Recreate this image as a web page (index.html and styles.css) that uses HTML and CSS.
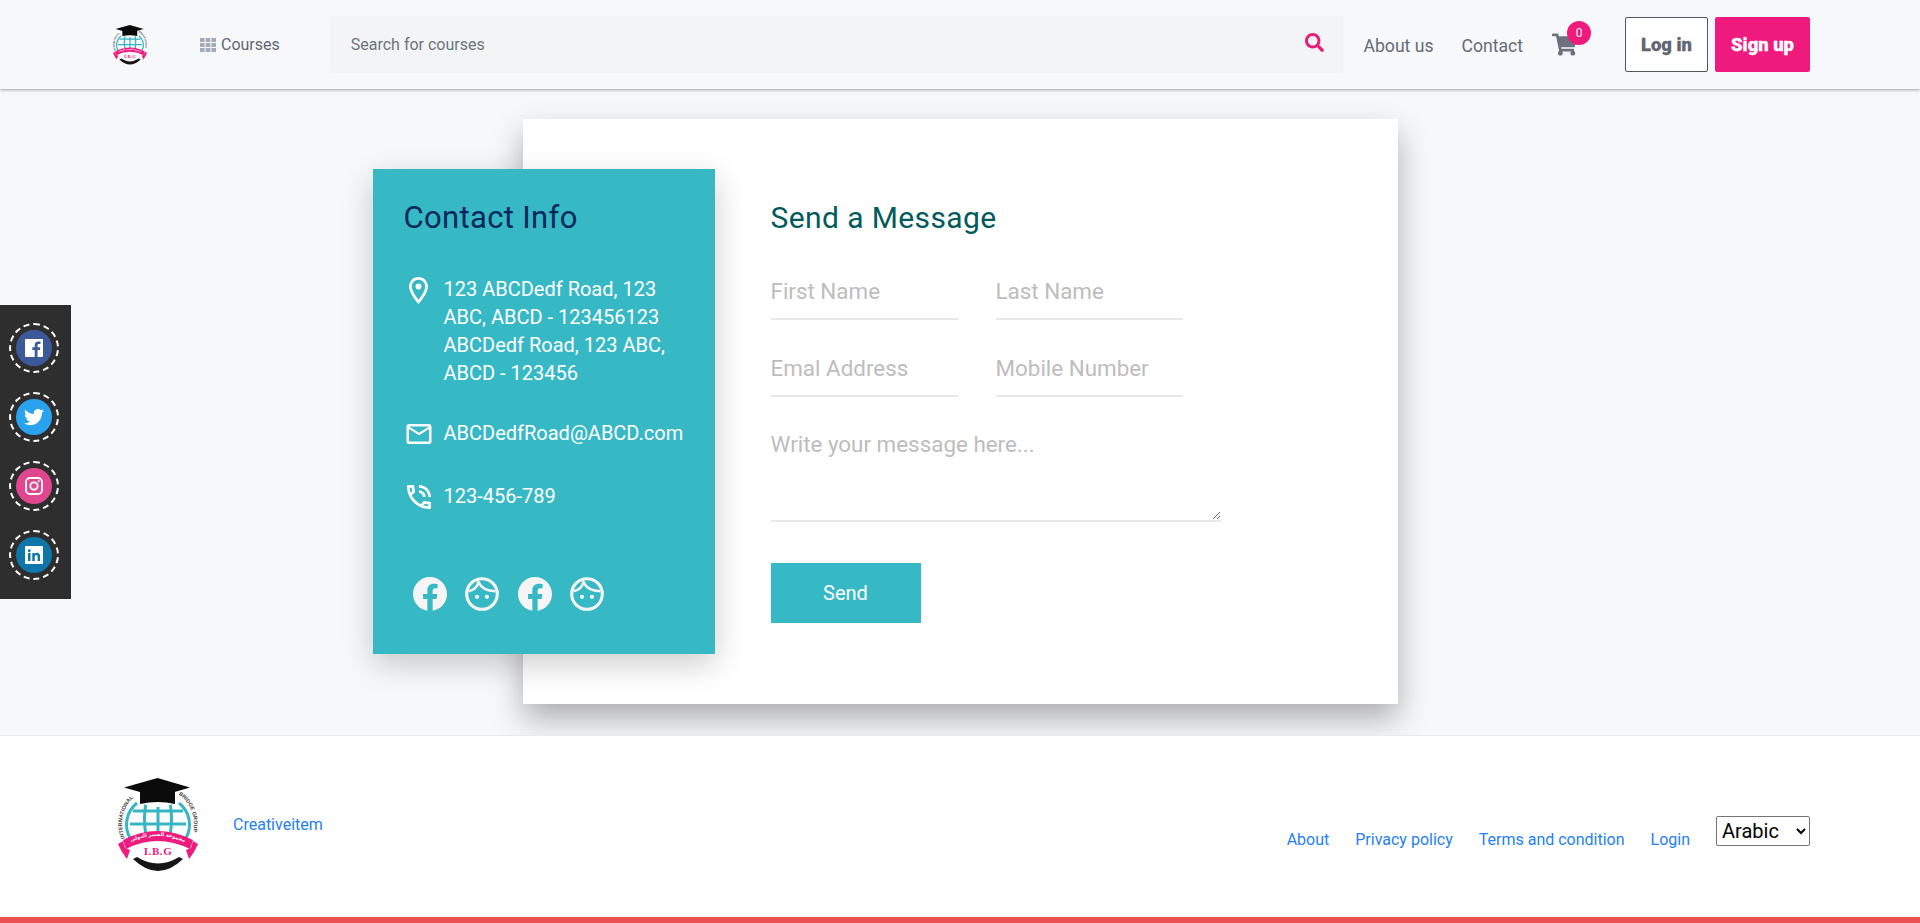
FILE: index.html
```html
<!DOCTYPE html>
<html lang="en">
<head>
<meta charset="utf-8">
<title>Contact</title>
<link rel="stylesheet" href="styles.css">
</head>
<body>
<svg class="defs" width="0" height="0" aria-hidden="true">
  <defs>
    <path id="ringL" d="M7.900 60.100 A36 36 0 0 1 20.400 16.500"/>
    <path id="ringR" d="M61.600 16.500 A36 36 0 0 1 74.100 60.100"/>
    <path id="ribbonArc" d="M8 66.500 Q40 49.500 72 66.500"/>
    <symbol id="logo" viewBox="0 0 82 94">
      <text class="logo-ring"><textPath href="#ringL">INTERNATIONAL</textPath></text>
      <text class="logo-ring"><textPath href="#ringR">BRIDGE GROUP</textPath></text>
      <path d="M13 60A27.500 27.500 0 0 1 20 25M69 60A27.500 27.500 0 0 0 62 25" fill="none" stroke="#35b7c3" stroke-width="3"/>
      <path d="M41 26V58M29 25Q26 40 29 58M53 25Q56 40 53 58M16 33H66M13 46H69" fill="none" stroke="#35b7c3" stroke-width="3"/>
      <path d="M22 14H60V24Q41 34 22 24Z" fill="#fff"/>
      <path d="M23 12H58V26Q41 22 23 26Z" fill="#0b0b0b"/>
      <path d="M40.500 0L73 9.500L40.500 19L7 9.500Z" fill="#0b0b0b"/>
      <path d="M6 62Q40 44 76 62L73 71Q40 55 9 71Z" fill="#ef1a7e"/>
      <path d="M6 63L1 66L5 74L10 81L13 72L8 70Z" fill="#ef1a7e"/>
      <path d="M76 63L81 66L77 74L72 81L69 72L74 70Z" fill="#ef1a7e"/>
      <path d="M16 81Q41 105 66 81L62 79Q41 92 20 79Z" fill="#161616"/>
      <text class="logo-ibg" x="41" y="77" text-anchor="middle">I.B.G</text>
      <text class="logo-ar"><textPath href="#ribbonArc" startOffset="10%">مجموعة الجسر الدولي</textPath></text>
    </symbol>
    <path id="fb" d="M504 256C504 119 393 8 256 8S8 119 8 256c0 123.780 90.690 226.380 209.250 245V327.690h-63V256h63v-54.640c0-62.150 37-96.480 93.670-96.480 27.140 0 55.520 4.840 55.520 4.840v61h-31.280c-30.800 0-40.410 19.120-40.410 38.730V256h68.780l-11 71.690h-57.780V501C413.310 482.380 504 379.780 504 256z"/>
    <g id="face">
      <circle cx="12" cy="12" r="10.800" fill="none" stroke="currentColor" stroke-width="2.200"/>
      <path d="M2.500 10C6 9.500 8.500 7.500 9.500 3.500 11 7 15 9.800 21.500 10" fill="none" stroke="currentColor" stroke-width="1.800"/>
      <circle cx="8.500" cy="14" r="1.500" fill="currentColor"/>
      <circle cx="15.500" cy="14" r="1.500" fill="currentColor"/>
    </g>
  </defs>
</svg>

<header class="topbar">
  <a class="brand" href="#"><svg class="brand-logo"><use href="#logo"/></svg></a>
  <a class="courses" href="#">
    <svg class="grid-icon" viewBox="0 0 16 14"><path d="M0 0h4.600v4H0zM5.700 0h4.600v4H5.700zM11.400 0H16v4h-4.600zM0 5h4.600v4H0zM5.700 5h4.600v4H5.700zM11.400 5H16v4h-4.600zM0 10h4.600v4H0zM5.700 10h4.600v4H5.700zM11.400 10H16v4h-4.600z"/></svg>
    Courses
  </a>
  <form class="search">
    <input class="search-input" type="text" placeholder="Search for courses">
    <svg class="search-icon" viewBox="0 0 512 512"><path d="M505 442.700L405.300 343c-4.500-4.500-10.600-7-17-7H372c27.600-35.300 44-79.700 44-128C416 93.100 322.900 0 208 0S0 93.100 0 208s93.100 208 208 208c48.300 0 92.700-16.400 128-44v16.300c0 6.400 2.500 12.500 7 17l99.700 99.700c9.400 9.400 24.600 9.400 33.900 0l28.300-28.300c9.400-9.400 9.400-24.600.1-34zM208 336c-70.700 0-128-57.200-128-128 0-70.700 57.200-128 128-128 70.700 0 128 57.200 128 128 0 70.700-57.200 128-128 128z"/></svg>
  </form>
  <nav class="nav">
    <a href="#">About us</a>
    <a href="#">Contact</a>
  </nav>
  <a class="cart" href="#">
    <svg class="cart-icon" viewBox="0 0 576 512"><path d="M528.120 301.319l47.273-208C578.806 78.301 567.391 67 551.990 67H159.208l-9.166-44.810C147.758 10.021 137.930 0 125.529 0H24C10.745 0 0 10.745 0 24v16c0 13.255 10.745 24 24 24h69.883l70.248 343.435C147.325 417.100 136 435.222 136 456c0 30.928 25.072 56 56 56s56-25.072 56-56c0-15.674-6.447-29.835-16.824-40h209.647C430.447 426.165 424 440.326 424 456c0 30.928 25.072 56 56 56s56-25.072 56-56c0-22.172-12.888-41.332-31.579-50.405l5.517-24.276c3.413-15.018-8.002-29.319-23.403-29.319H218.117l-6.545-32h293.145c11.206 0 20.920-7.754 23.403-18.681z"/></svg>
    <span class="badge">0</span>
  </a>
  <a class="btn btn-login" href="#">Log in</a>
  <a class="btn btn-signup" href="#">Sign up</a>
</header>

<aside class="share">
  <a class="share-ring" href="#"><span class="share-dot dot-fb">
    <svg class="share-icon" viewBox="0 0 18 18"><path fill="#fff" d="M1 0h16a1 1 0 0 1 1 1v16a1 1 0 0 1-1 1h-4.500v-7h2.400l.4-2.800h-2.800V6.500c0-.8.300-1.400 1.400-1.400H15.500V2.600c-.3 0-1.100-.1-2.100-.1-2.200 0-3.700 1.300-3.700 3.700v2H7.300V11h2.400v7H1a1 1 0 0 1-1-1V1a1 1 0 0 1 1-1z"/></svg>
  </span></a>
  <a class="share-ring" href="#"><span class="share-dot dot-tw">
    <svg class="share-icon share-icon-lg" viewBox="0 0 512 512"><path fill="#fff" d="M459.370 151.716c.325 4.548.325 9.097.325 13.645 0 138.720-105.583 298.558-298.558 298.558-59.452 0-114.680-17.219-161.137-47.106 8.447.974 16.568 1.299 25.340 1.299 49.055 0 94.213-16.568 130.274-44.832-46.132-.975-84.792-31.188-98.112-72.772 6.498.974 12.995 1.624 19.818 1.624 9.421 0 18.843-1.300 27.614-3.573-48.081-9.747-84.143-51.980-84.143-102.985v-1.299c13.969 7.797 30.214 12.670 47.431 13.319-28.264-18.843-46.781-51.005-46.781-87.391 0-19.492 5.197-37.360 14.294-52.954 51.655 63.675 129.300 105.258 216.365 109.807-1.624-7.797-2.599-15.918-2.599-24.040 0-57.828 46.782-104.934 104.934-104.934 30.213 0 57.502 12.670 76.670 33.137 23.715-4.548 46.456-13.320 66.599-25.340-7.798 24.366-24.366 43.534-46.132 56.205 21.117-2.274 41.584-8.122 60.426-16.243-14.292 20.791-32.161 39.308-52.628 54.253z"/></svg>
  </span></a>
  <a class="share-ring" href="#"><span class="share-dot dot-ig">
    <svg class="share-icon" viewBox="0 0 18 18"><rect x="1" y="1" width="16" height="16" rx="4" fill="none" stroke="#fff" stroke-width="1.800"/><circle cx="9" cy="9" r="3.700" fill="none" stroke="#fff" stroke-width="1.800"/><circle cx="13.700" cy="4.300" r="1" fill="#fff"/></svg>
  </span></a>
  <a class="share-ring" href="#"><span class="share-dot dot-in">
    <svg class="share-icon" viewBox="0 0 18 18"><path fill="#fff" fill-rule="evenodd" d="M1 0h16a1 1 0 0 1 1 1v16a1 1 0 0 1-1 1H1a1 1 0 0 1-1-1V1a1 1 0 0 1 1-1zM3 7v8h2.500V7zm1.250-3.800a1.450 1.450 0 1 0 0 2.900 1.450 1.450 0 0 0 0-2.900zM7.300 7v8h2.500v-4.200c0-1.100.5-1.800 1.500-1.800s1.300.7 1.300 1.800V15h2.500v-4.700c0-2.300-1.200-3.500-3-3.500-1.100 0-1.900.5-2.300 1.200V7z"/></svg>
  </span></a>
</aside>

<main class="page">
  <section class="card">
    <div class="info">
      <h2 class="info-title">Contact Info</h2>
      <ul class="info-list">
        <li class="info-row">
          <span class="info-icon"><svg class="ico-pin" viewBox="5 2 14 20"><path fill="#fff" d="M12 2C8.130 2 5 5.130 5 9c0 5.250 7 13 7 13s7-7.750 7-13c0-3.870-3.130-7-7-7zM7 9c0-2.760 2.240-5 5-5s5 2.240 5 5c0 2.880-2.880 7.190-5 9.880C9.920 16.210 7 11.850 7 9z"/><circle fill="#fff" cx="12" cy="9" r="2.200"/></svg></span>
          <span>123 ABCDedf Road, 123 ABC, ABCD - 123456123 ABCDedf Road, 123 ABC, ABCD - 123456</span>
        </li>
        <li class="info-row">
          <span class="info-icon"><svg class="ico-mail" viewBox="2 4 20 16"><path fill="#fff" d="M22 6c0-1.100-.9-2-2-2H4c-1.100 0-2 .9-2 2v12c0 1.100.9 2 2 2h16c1.100 0 2-.9 2-2V6zm-2 0l-8 5-8-5h16zm0 12H4V8l8 5 8-5v10z"/></svg></span>
          <span>ABCDedfRoad@ABCD.com</span>
        </li>
        <li class="info-row info-row-phone">
          <span class="info-icon"><svg class="ico-phone" viewBox="3 3 18 18"><path fill="#fff" d="M15 12h2c0-2.760-2.240-5-5-5v2c1.660 0 3 1.340 3 3zm4 0h2c0-4.970-4.030-9-9-9v2c3.870 0 7 3.130 7 7zm1 3.500c-1.250 0-2.450-.2-3.570-.57-.1-.03-.21-.05-.31-.05-.26 0-.51.1-.71.29l-2.200 2.200c-2.830-1.440-5.150-3.750-6.590-6.590l2.200-2.210c.28-.26.360-.65.250-1C8.700 6.450 8.500 5.250 8.500 4c0-.55-.45-1-1-1H4c-.55 0-1 .45-1 1 0 9.390 7.610 17 17 17 .55 0 1-.45 1-1v-3.500c0-.55-.45-1-1-1zM5.030 5h1.500c.07.88.22 1.750.45 2.580l-1.200 1.210c-.4-1.210-.66-2.470-.75-3.790zM19 18.970c-1.320-.09-2.600-.35-3.800-.76l1.200-1.200c.85.24 1.720.39 2.600.45v1.510z"/></svg></span>
          <span>123-456-789</span>
        </li>
      </ul>
      <div class="info-social">
        <a href="#"><svg class="soc" viewBox="8 8 496 496"><use href="#fb"/></svg></a>
        <a href="#"><svg class="soc" viewBox="0 0 24 24"><use href="#face"/></svg></a>
        <a href="#"><svg class="soc" viewBox="8 8 496 496"><use href="#fb"/></svg></a>
        <a href="#"><svg class="soc" viewBox="0 0 24 24"><use href="#face"/></svg></a>
      </div>
    </div>
    <form class="message">
      <h2 class="message-title">Send a Message</h2>
      <div class="fields">
        <input class="field" type="text" placeholder="First Name">
        <input class="field" type="text" placeholder="Last Name">
        <input class="field" type="text" placeholder="Emal Address">
        <input class="field" type="text" placeholder="Mobile Number">
      </div>
      <textarea class="textarea" placeholder="Write your message here..."></textarea>
      <button class="send" type="button">Send</button>
    </form>
  </section>
</main>

<footer class="footer">
  <a class="footer-brand" href="#"><svg class="footer-logo"><use href="#logo"/></svg></a>
  <a class="footer-credit" href="#">Creativeitem</a>
  <nav class="footer-links">
    <a href="#">About</a>
    <a href="#">Privacy policy</a>
    <a href="#">Terms and condition</a>
    <a href="#">Login</a>
  </nav>
  <select class="lang">
    <option>Arabic</option>
    <option>English</option>
  </select>
</footer>
</body>
</html>
```

FILE: styles.css
```css
* { box-sizing: border-box; }

html, body { margin: 0; padding: 0; }

body {
  position: relative;
  height: 923px;
  overflow: hidden;
  background: #f7f8fa;
  font-family: Roboto, "Noto Sans", sans-serif;
  color: #6c757d;
}

a { text-decoration: none; color: inherit; }

.defs { position: absolute; }

.logo-ring { font: 700 5.4px "Liberation Sans", sans-serif; fill: #444; }
.logo-ibg { font: 700 11px "Liberation Serif", serif; fill: #ef1a7e; letter-spacing: .6px; }
.logo-ar { font: 700 5px "DejaVu Sans", sans-serif; fill: #fff; }

/* header */
.topbar {
  display: flex;
  align-items: center;
  height: 89px;
  padding: 0 110px 0 112px;
  background: #f7f8fa;
  box-shadow: 0 1px 3px rgba(0, 0, 0, .35);
  position: relative;
}

.brand { display: block; height: 40px; }
.brand-logo { display: block; width: 36px; height: 40px; }

.courses {
  display: flex;
  align-items: center;
  gap: 5px;
  margin-left: 52px;
  font-size: 16px;
  color: #5f6672;
}

.grid-icon { width: 16px; height: 14px; fill: #a2a9b8; }

.search {
  flex: 1;
  display: flex;
  align-items: center;
  height: 57px;
  margin-left: 50px;
  padding: 0 19px 0 21px;
  background: #f2f4f5;
  border-radius: 3px;
}

.search-input {
  flex: 1;
  min-width: 0;
  border: 0;
  padding: 0;
  background: transparent;
  font: 16px Roboto, sans-serif;
  outline: none;
}

.search-input::placeholder { color: #6c757d; opacity: 1; }

.search-icon { width: 19px; height: 19px; margin-top: -4px; fill: #ec1a79; }

.nav {
  display: flex;
  gap: 28px;
  margin-left: 21px;
  padding-top: 3px;
  font-size: 17.6px;
  color: #656c77;
}

.cart { position: relative; display: block; width: 25px; height: 23px; margin-left: 29px; }
.cart-icon { display: block; width: 25px; height: 23px; fill: #6c717d; }

.badge {
  position: absolute;
  top: -12px;
  left: 15px;
  width: 24px;
  height: 24px;
  border-radius: 50%;
  background: #ef1a7e;
  color: #fff;
  font-size: 12px;
  line-height: 24px;
  text-align: center;
}

.btn {
  display: flex;
  align-items: center;
  justify-content: center;
  height: 55px;
  border-radius: 2px;
  font-size: 18.4px;
  font-weight: 900;
  -webkit-text-stroke: .3px currentColor;
}

.btn-login {
  width: 83px;
  margin-left: 48px;
  border: 1px solid #4f5663;
  background: #fff;
  color: #5f6672;
}

.btn-signup {
  width: 95px;
  margin-left: 7px;
  background: #ef1a7e;
  color: #fff;
}

/* floating share bar */
.share {
  position: fixed;
  top: 305px;
  left: 0;
  display: flex;
  flex-direction: column;
  gap: 19px;
  width: 71px;
  height: 294px;
  padding: 18px 0 0 9px;
  background: #2e2e2e;
}

.share-ring {
  display: flex;
  align-items: center;
  justify-content: center;
  width: 50px;
  height: 50px;
  border: 2px dashed #fff;
  border-radius: 50%;
}

.share-dot {
  display: flex;
  align-items: center;
  justify-content: center;
  width: 36px;
  height: 36px;
  border-radius: 50%;
}

.dot-fb { background: #3d5a98; }
.dot-tw { background: #2aa3ef; }
.dot-ig { background: #e0478f; }
.dot-in { background: #0e76a8; }

.share-icon { display: block; width: 18px; height: 18px; }
.share-icon-lg { width: 20px; height: 20px; }

/* main */
.page {
  display: flex;
  justify-content: center;
  height: 646px;
  padding-top: 30px;
}

.card {
  display: flex;
  align-items: flex-start;
  width: 875px;
  height: 585px;
  background: #fff;
  box-shadow: 0 15px 30px rgba(0, 0, 0, .3);
}

.info {
  flex: none;
  width: 342px;
  height: 485px;
  margin: 50px 0 0 -150px;
  padding: 29px 0 0 31px;
  background: #37b8c5;
  color: #fff;
  box-shadow: 0 10px 30px rgba(0, 0, 0, .2);
}

.info-title {
  margin: 0;
  font-size: 31px;
  font-weight: 400;
  line-height: 40px;
  letter-spacing: .35px;
  color: #03275c;
}

.info-list {
  list-style: none;
  display: flex;
  flex-direction: column;
  gap: 32px;
  margin: 37px 0 0;
  padding: 0;
  font-size: 20px;
  line-height: 28px;
}

.info-row { display: flex; width: 300px; }
.info-row-phone { margin-top: 3px; }

.info-icon {
  flex: none;
  display: flex;
  justify-content: center;
  width: 40px;
  padding-right: 10px;
}

.ico-pin { width: 19px; height: 27px; margin-top: 2px; }
.ico-mail { width: 26px; height: 20px; margin-top: 5px; }
.ico-phone { width: 24px; height: 24px; margin-top: 3px; }

.info-social {
  display: flex;
  gap: 18.67px;
  margin: 67px 0 0 9px;
  color: #f5f5f5;
}

.info-social a { display: block; height: 34px; }
.soc { display: block; width: 34px; height: 34px; fill: #f5f5f5; color: #f5f5f5; }

.message { flex: none; width: 450px; margin-left: 56px; padding-top: 79px; }

.message-title {
  margin: 0 0 32px;
  font-size: 30px;
  font-weight: 400;
  line-height: 40px;
  letter-spacing: .4px;
  color: #035a5c;
}

.fields {
  display: grid;
  grid-template-columns: 187px 187px;
  column-gap: 38px;
  row-gap: 27px;
}

.field, .textarea {
  display: block;
  border: 0;
  border-bottom: 2px solid #e7e7e7;
  border-radius: 0;
  padding: 0 0 6px;
  background: transparent;
  font: 22.4px Roboto, sans-serif;
  outline: none;
}

.field { width: 187px; height: 50px; }

.textarea {
  width: 450px;
  height: 99px;
  margin-top: 26px;
  padding-top: 7px;
  line-height: 28px;
}

.field::placeholder, .textarea::placeholder { color: #bdbdbd; opacity: 1; }

.send {
  display: block;
  width: 150px;
  height: 60px;
  margin-top: 41px;
  border: 0;
  background: #37b8c5;
  color: #fff;
  font: 20px Roboto, sans-serif;
}

/* footer */
.footer {
  position: relative;
  display: flex;
  align-items: flex-start;
  height: 188px;
  padding: 42px 110px 0 117px;
  background: #fff;
  border-top: 1px solid #e9e9e9;
  border-bottom: 6px solid #ea5252;
  font-size: 16px;
  color: #2680f5;
}

.footer-brand { display: block; height: 94px; }
.footer-logo { display: block; width: 82px; height: 94px; }

.footer-credit { margin: 38px 0 0 34px; line-height: 18px; }

.footer-links {
  display: flex;
  gap: 26px;
  margin: 52px 0 0 auto;
  line-height: 20px;
}

.lang {
  width: 94px;
  height: 30px;
  margin: 38px 0 0 26px;
  padding-left: 1px;
  border: 1px solid #767676;
  border-radius: 2px;
  background: #fff;
  color: #000;
  font: 20px Roboto, sans-serif;
}
```
